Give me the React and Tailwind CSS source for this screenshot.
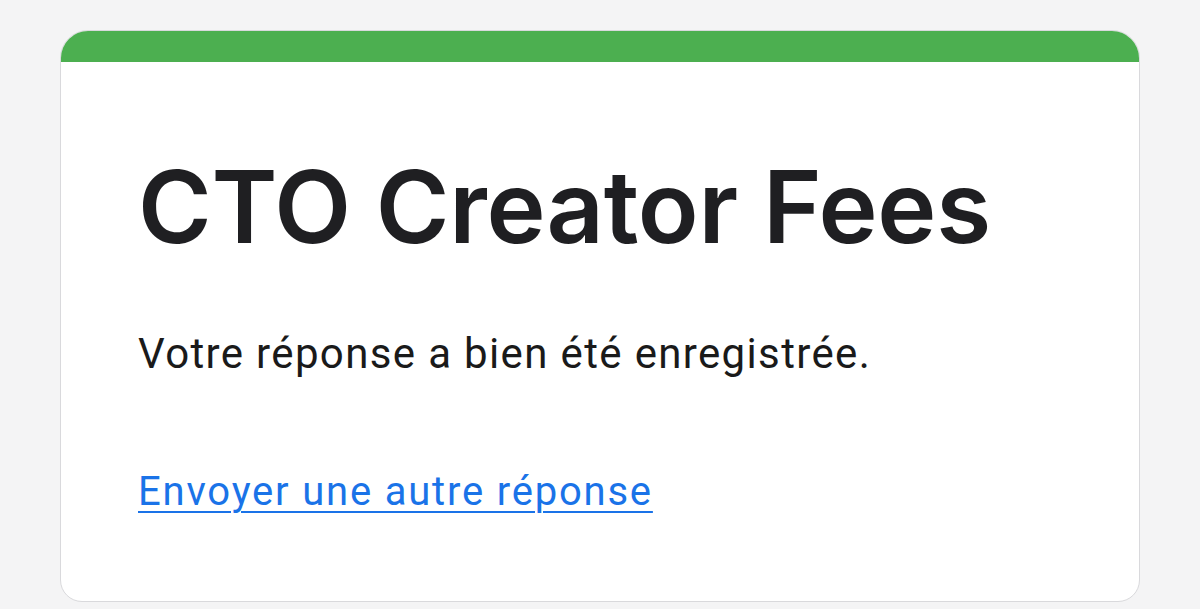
export default function App() {
  return (
    <div className="w-[1200px] h-[609px] bg-[#f4f4f5] pt-[30px] pl-[60px] overflow-hidden">
      <div className="w-[1080px] bg-white rounded-[28px] rounded-b-[22px] border border-[#d9d9dc] overflow-hidden">
        <div className="h-[32px] bg-[#4caf50] -mx-px -mt-px"></div>
        <div className="pl-[77px] pt-[95px] pb-[85px]">
          <h1 className="text-[100px] leading-none font-semibold text-[#1f1f22] tracking-[-0.2px]" style={{ fontFamily: "Inter, sans-serif" }}>
            CTO Creator Fees
          </h1>
          <p className="mt-[72px] text-[42px] leading-[1.2] text-[#1a1a1a] tracking-[1.35px]" style={{ fontFamily: "Roboto, sans-serif" }}>
            Votre réponse a bien été enregistrée.
          </p>
          <a href="#" className="block mt-[89px] text-[40px] leading-[1.2] text-[#1a73e8] tracking-[1.8px] underline underline-offset-[6px] decoration-[2px]" style={{ fontFamily: "Roboto, sans-serif" }}>
            Envoyer une autre réponse
          </a>
        </div>
      </div>
    </div>
  );
}
